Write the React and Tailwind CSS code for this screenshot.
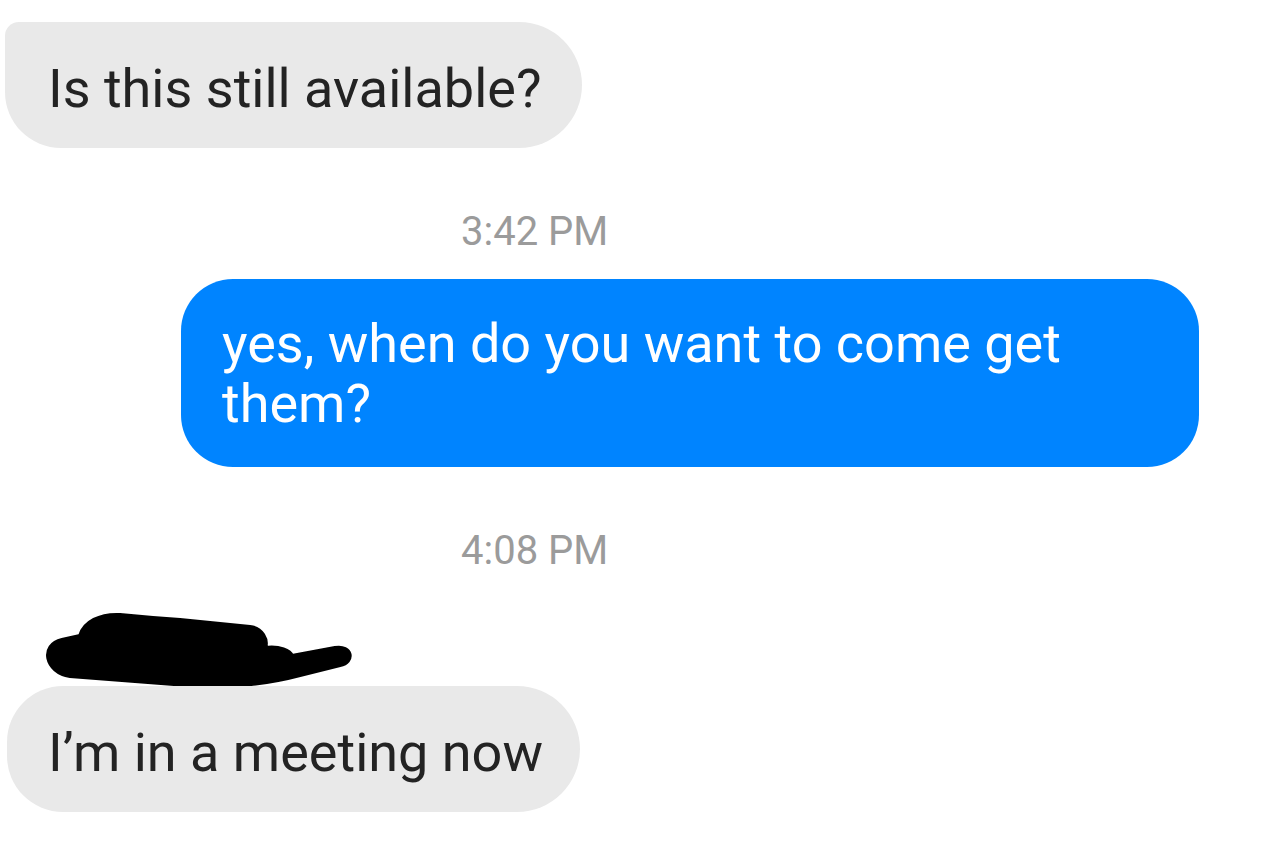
import React from 'react';

const font = { fontFamily: 'Roboto, "Noto Sans", sans-serif' };

function Scribble() {
  // redaction mark over the sender name
  return (
    <svg width="360" height="85" viewBox="0 605 360 85" className="block">
      <path
        d="M70 676 C45 672 40 645 62 640 L80 636 C84 622 100 614 120 615 C140 617 150 618 180 620 L250 627 C262 628 268 640 265 648 C280 646 290 651 292 656 L335 648 C352 645 355 662 340 665 L300 675 C270 683 230 688 200 686 Z"
        fill="#000"
        stroke="#000"
        strokeWidth="4"
        strokeLinejoin="round"
      />
    </svg>
  );
}

export default function App() {
  return (
    <div className="w-[1280px] h-[841px] bg-white overflow-hidden flex flex-col" style={font}>
      <div className="ml-[5px] mt-[22px] h-[126px] w-[577px] bg-[#e9e9e9] rounded-tl-[14px] rounded-bl-[56px] rounded-r-[63px] flex items-center pl-[43px]">
        <span className="text-[54px] leading-none text-[#232323] mt-[8px]">Is this still available?</span>
      </div>

      <div className="mt-[60px] ml-[461px] text-[40px] leading-[48px] text-[#9b9b9b]">3:42 PM</div>

      <div className="mt-[23px] ml-[181px] w-[1018px] h-[188px] bg-[#0084ff] rounded-[52px] flex items-center pl-[41px]">
        <p className="text-[54px] leading-[60px] text-white mt-[2px]">
          yes, when do you want to come get
          <br />
          them?
        </p>
      </div>

      <div className="mt-[60px] ml-[461px] text-[40px] leading-[48px] text-[#9b9b9b]">4:08 PM</div>

      <div className="mt-[30px]">
        <Scribble />
      </div>

      <div className="-mt-[4px] ml-[7px] h-[126px] w-[573px] bg-[#e9e9e9] rounded-tl-[56px] rounded-bl-[56px] rounded-r-[63px] flex items-center pl-[41px]">
        <span className="text-[54px] leading-none text-[#232323] mt-[8px]">I’m in a meeting now</span>
      </div>
    </div>
  );
}
